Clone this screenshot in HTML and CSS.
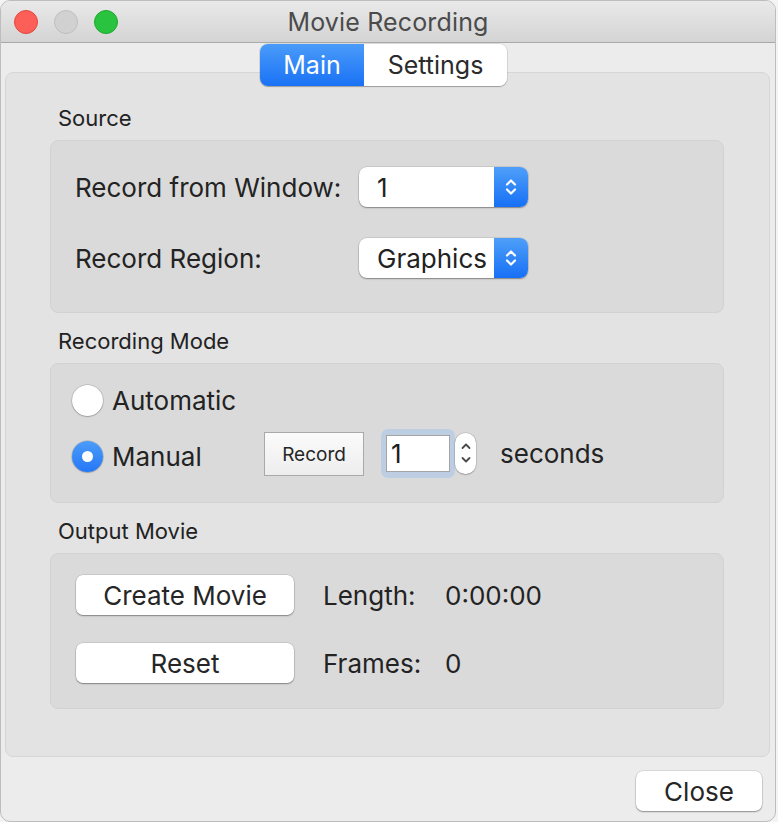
FILE: index.html
```html
<!DOCTYPE html>
<html lang="en">
<head>
<meta charset="utf-8">
<title>Movie Recording</title>
<link rel="stylesheet" href="styles.css">
</head>
<body>
<div class="window">
  <header class="titlebar">
    <div class="lights">
      <span class="light red"></span>
      <span class="light gray"></span>
      <span class="light green"></span>
    </div>
    <div class="title">Movie Recording</div>
    <div class="spacer"></div>
  </header>

  <main class="content">
    <div class="segmented">
      <span class="seg active">Main</span>
      <span class="seg">Settings</span>
    </div>

    <div class="tabbox">
      <div class="section-label first">Source</div>
      <div class="group source">
        <div class="form-row">
          <span class="label">Record from Window:</span>
          <div class="popup">
            <span class="popup-value">1</span>
            <span class="popup-arrows">
              <svg width="12" height="20" viewBox="0 0 12 20"><path d="M2 7.5 L6 3.5 L10 7.5 M2 12.5 L6 16.5 L10 12.5" fill="none" stroke="#fff" stroke-width="2.2" stroke-linecap="round" stroke-linejoin="round"/></svg>
            </span>
          </div>
        </div>
        <div class="form-row">
          <span class="label">Record Region:</span>
          <div class="popup">
            <span class="popup-value">Graphics</span>
            <span class="popup-arrows">
              <svg width="12" height="20" viewBox="0 0 12 20"><path d="M2 7.5 L6 3.5 L10 7.5 M2 12.5 L6 16.5 L10 12.5" fill="none" stroke="#fff" stroke-width="2.2" stroke-linecap="round" stroke-linejoin="round"/></svg>
            </span>
          </div>
        </div>
      </div>

      <div class="section-label">Recording Mode</div>
      <div class="group mode">
        <div class="mode-row top">
          <label class="radio-item"><span class="radio"></span><span>Automatic</span></label>
        </div>
        <div class="mode-row">
          <label class="radio-item shifted"><span class="radio checked"></span><span>Manual</span></label>
          <button class="btn-square">Record</button>
          <div class="number-field">
            <div class="focus-ring"><span class="field">1</span></div>
            <span class="stepper">
              <svg width="12" height="30" viewBox="0 0 12 30"><path d="M2.5 10 L6 6.5 L9.5 10 M2.5 20 L6 23.5 L9.5 20" fill="none" stroke="#4a4a4a" stroke-width="1.8" stroke-linecap="round" stroke-linejoin="round"/></svg>
            </span>
          </div>
          <span class="unit">seconds</span>
        </div>
      </div>

      <div class="section-label">Output Movie</div>
      <div class="group output">
        <div class="out-row">
          <button class="btn wide">Create Movie</button>
          <span class="out-key">Length:</span>
          <span class="out-val">0:00:00</span>
        </div>
        <div class="out-row">
          <button class="btn wide">Reset</button>
          <span class="out-key">Frames:</span>
          <span class="out-val">0</span>
        </div>
      </div>
    </div>

    <div class="footer">
      <button class="btn close">Close</button>
    </div>
  </main>
</div>
</body>
</html>
```

FILE: styles.css
```css
* { box-sizing: border-box; }

html, body {
  margin: 0;
  padding: 0;
  background: #f4f4f4;
}

body {
  width: 778px;
  height: 822px;
  font-family: Inter, "Liberation Sans", Arial, sans-serif;
  color: #232323;
  font-size: 26px;
}

.window {
  width: 776px;
  height: 822px;
  border: 1px solid #bdbdbd;
  border-radius: 10px;
  background: #ececec;
  overflow: hidden;
  display: flex;
  flex-direction: column;
}

/* Title bar */
.titlebar {
  height: 42px;
  flex: none;
  display: grid;
  grid-template-columns: 1fr auto 1fr;
  align-items: center;
  background: linear-gradient(#e9e9e9, #d4d4d4);
  border-bottom: 1px solid #a9a9a9;
}

.lights {
  display: flex;
  gap: 16px;
  padding-left: 13px;
}

.light {
  width: 24px;
  height: 24px;
  border-radius: 50%;
  border: 1px solid transparent;
}
.light.red { background: #fc5f57; border-color: #e2463f; }
.light.gray { background: #d1d1d1; border-color: #bebebe; }
.light.green { background: #29c33f; border-color: #1ea82f; }

.title {
  color: #4b4b4b;
  font-size: 25px;
  letter-spacing: 0.15px;
}

/* Content */
.content {
  flex: 1;
  display: flex;
  flex-direction: column;
  padding: 0 5px 0 4px;
}

.segmented {
  align-self: center;
  margin-top: 1px;
  margin-left: -8px;
  margin-bottom: -14px;
  height: 42px;
  display: flex;
  position: relative;
  z-index: 1;
  border-radius: 8px;
  box-shadow: 0 1px 1px rgba(0,0,0,0.25), 0 0 0 1px rgba(0,0,0,0.08);
}

.seg {
  display: flex;
  align-items: center;
  justify-content: center;
  height: 42px;
  font-size: 25px;
  background: #fff;
  color: #2b2b2b;
  width: 143px;
  border-radius: 0 8px 8px 0;
}

.seg.active {
  width: 104px;
  color: #fff;
  background: linear-gradient(#4a9bf9, #1a72f6);
  border-radius: 8px 0 0 8px;
}

.tabbox {
  height: 685px;
  flex: none;
  background: #e3e3e3;
  border: 1px solid #d6d6d6;
  border-radius: 8px;
  padding: 33px 45px 0 44px;
}

.section-label {
  font-size: 22px;
  line-height: 24px;
  padding-left: 8px;
  margin-top: 16px;
  margin-bottom: 10px;
  color: #222;
}
.section-label.first { margin-top: 0; }

.group {
  background: #dadada;
  border: 1px solid #d2d2d2;
  border-radius: 8px;
}

/* Source */
.group.source {
  padding: 26px 24px 34px;
  display: flex;
  flex-direction: column;
  gap: 31px;
}

.form-row {
  display: grid;
  grid-template-columns: 284px 169px;
  align-items: center;
  height: 40px;
}

.popup {
  height: 40px;
  display: flex;
  border-radius: 8px;
  background: #fff;
  box-shadow: 0 1px 1.5px rgba(0,0,0,0.35), 0 0 0 0.5px rgba(0,0,0,0.15);
  overflow: hidden;
}

.popup-value {
  flex: 1;
  display: flex;
  align-items: center;
  padding-left: 18px;
  color: #222;
}

.popup-arrows {
  width: 34px;
  display: flex;
  align-items: center;
  justify-content: center;
  background: linear-gradient(#4f9ff9, #1670f5);
}

/* Recording mode */
.group.mode {
  padding: 20px 20px 24px 21px;
  display: flex;
  flex-direction: column;
  gap: 12px;
}

.mode-row {
  display: flex;
  align-items: center;
  height: 50px;
}
.mode-row.top { height: 32px; }

.radio-item {
  width: 192px;
  display: flex;
  align-items: center;
  gap: 9px;
}
.radio-item.shifted { margin-top: 6px; }

.radio {
  width: 31px;
  height: 31px;
  border-radius: 50%;
  background: #fff;
  box-shadow: 0 0.5px 1.5px rgba(0,0,0,0.35), 0 0 0 0.5px rgba(0,0,0,0.18);
  display: flex;
  align-items: center;
  justify-content: center;
}
.radio.checked {
  background: linear-gradient(#4c9cf8, #2478f6);
}
.radio.checked::after {
  content: "";
  width: 11px;
  height: 11px;
  border-radius: 50%;
  background: #fff;
}

.btn-square {
  width: 100px;
  height: 44px;
  margin-top: 2px;
  border: 1px solid #a9a9a9;
  background: linear-gradient(#fbfbfb, #ededed);
  font-family: inherit;
  font-size: 19px;
  color: #262626;
  padding: 0;
}

.number-field {
  display: flex;
  align-items: center;
  margin-left: 17px;
}

.focus-ring {
  width: 74px;
  height: 49px;
  padding: 6px 5px;
  background: #bdcde2;
  border-radius: 7px;
}

.field {
  display: flex;
  align-items: center;
  height: 37px;
  background: #fff;
  border: 1px solid #a4a4a4;
  padding-left: 4px;
  font-size: 26px;
  color: #1c1c1c;
}

.stepper {
  width: 21px;
  height: 41px;
  background: #fff;
  border-radius: 10px;
  box-shadow: 0 0.5px 1.5px rgba(0,0,0,0.35), 0 0 0 0.5px rgba(0,0,0,0.12);
  display: flex;
  align-items: center;
  justify-content: center;
}

.unit {
  margin-left: 24px;
}

/* Output */
.group.output {
  padding: 21px 24px 25px 25px;
  display: flex;
  flex-direction: column;
  gap: 28px;
}

.out-row {
  display: flex;
  align-items: center;
  height: 40px;
}

.btn {
  height: 40px;
  border: none;
  border-radius: 7px;
  background: #fff;
  box-shadow: 0 1px 1.5px rgba(0,0,0,0.35), 0 0 0 0.5px rgba(0,0,0,0.15);
  font-family: inherit;
  font-size: 26px;
  color: #262626;
  padding: 0;
}

.btn.wide { width: 218px; }

.out-key {
  margin-left: 29px;
  width: 122px;
}

/* Footer */
.footer {
  display: flex;
  justify-content: flex-end;
  padding: 14px 8px 0 0;
}

.btn.close {
  width: 126px;
}
```
